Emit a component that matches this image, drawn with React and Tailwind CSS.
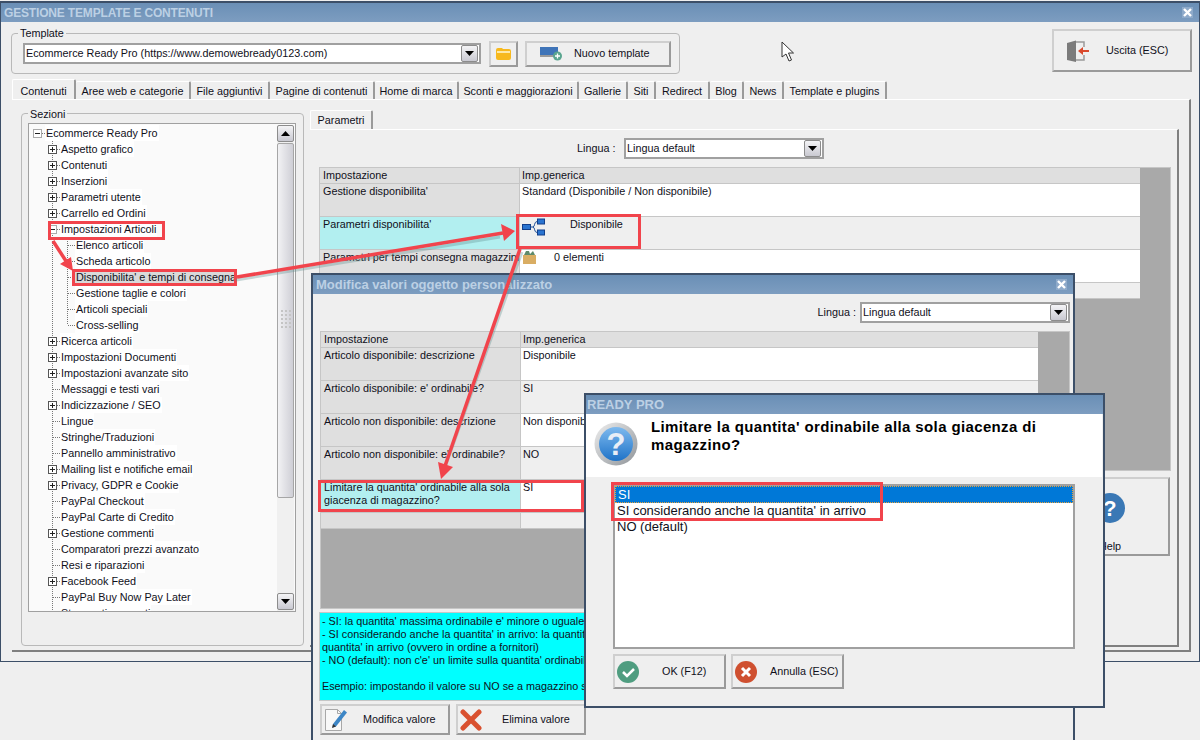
const tree = [
  { t: "Ecommerce Ready Pro", l: 0, box: "minus" },
  { t: "Aspetto grafico", l: 1, box: "plus" },
  { t: "Contenuti", l: 1, box: "plus" },
  { t: "Inserzioni", l: 1, box: "plus" },
  { t: "Parametri utente", l: 1, box: "plus" },
  { t: "Carrello ed Ordini", l: 1, box: "plus" },
  { t: "Impostazioni Articoli", l: 1, box: "minus" },
  { t: "Elenco articoli", l: 2 },
  { t: "Scheda articolo", l: 2 },
  { t: "Disponibilita' e tempi di consegna", l: 2, sel: true },
  { t: "Gestione taglie e colori", l: 2 },
  { t: "Articoli speciali", l: 2 },
  { t: "Cross-selling", l: 2 },
  { t: "Ricerca articoli", l: 1, box: "plus" },
  { t: "Impostazioni Documenti", l: 1, box: "plus" },
  { t: "Impostazioni avanzate sito", l: 1, box: "plus" },
  { t: "Messaggi e testi vari", l: 1 },
  { t: "Indicizzazione / SEO", l: 1, box: "plus" },
  { t: "Lingue", l: 1 },
  { t: "Stringhe/Traduzioni", l: 1 },
  { t: "Pannello amministrativo", l: 1 },
  { t: "Mailing list e notifiche email", l: 1, box: "plus" },
  { t: "Privacy, GDPR e Cookie", l: 1, box: "plus" },
  { t: "PayPal Checkout", l: 1 },
  { t: "PayPal Carte di Credito", l: 1 },
  { t: "Gestione commenti", l: 1, box: "plus" },
  { t: "Comparatori prezzi avanzato", l: 1 },
  { t: "Resi e riparazioni", l: 1 },
  { t: "Facebook Feed", l: 1, box: "plus" },
  { t: "PayPal Buy Now Pay Later", l: 1 },
  { t: "Strumenti avanzati", l: 1 },
];

const tabs = [
  ["Contenuti", "w-[64px]"],
  ["Aree web e categorie", "w-[115px]"],
  ["File aggiuntivi", "w-[79px]"],
  ["Pagine di contenuti", "w-[105px]"],
  ["Home di marca", "w-[84px]"],
  ["Sconti e maggiorazioni", "w-[120px]"],
  ["Gallerie", "w-[49px]"],
  ["Siti", "w-[28px]"],
  ["Redirect", "w-[54px]"],
  ["Blog", "w-[34px]"],
  ["News", "w-[40px]"],
  ["Template e plugins", "w-[103px]"],
];

const bevel = "border-2 border-t-[#cfcfcf] border-l-[#cfcfcf] border-r-[#9a9a9a] border-b-[#9a9a9a]";
const titleBar = "bg-gradient-to-b from-[#6a8fb6] to-[#7d9dc0] text-[#bcd0e4] font-bold";

const Triangle = () => (
  <svg width="9" height="5" viewBox="0 0 9 5"><path d="M0 0h9L4.5 5z" fill="#000" /></svg>
);

const ArrowBox = ({ up, className = "" }) => (
  <div className={`flex h-[17px] w-[17px] shrink-0 items-center justify-center rounded-[2px] border border-[#8c8c8c] bg-gradient-to-b from-[#f4f4f6] to-[#c9c9d1] ${className}`}>
    <div className={up ? "rotate-180" : ""}><Triangle /></div>
  </div>
);

const Select = ({ className, text }) => (
  <div className={`flex h-[21px] items-center justify-between border-2 border-[#a0a0a0] bg-white pl-[1px] pr-[1px] ${className}`}>
    <span className="whitespace-nowrap">{text}</span>
    <ArrowBox />
  </div>
);

const CloseX = () => (
  <div className="flex h-[11px] w-[11px] items-center justify-center bg-[#8eaaca]">
    <svg width="9" height="9" viewBox="0 0 9 9"><path d="M1 1l7 7M8 1L1 8" stroke="#fff" strokeWidth="2.4" /></svg>
  </div>
);

const Expander = ({ kind }) => (
  <svg width="9" height="9" viewBox="0 0 9 9" className="shrink-0">
    <rect x=".5" y=".5" width="8" height="8" fill="#fff" stroke={kind === "minus" ? "#aaa" : "#555"} />
    <path d={kind === "plus" ? "M2 4.5h5M4.5 2v5" : "M2 4.5h5"} stroke="#222" />
  </svg>
);

const TreeRow = ({ item }) => {
  const indent = item.l === 0 ? "ml-[4px]" : item.l === 1 ? "ml-[19px]" : "ml-[39px]";
  return (
    <div className="flex h-4 items-center whitespace-nowrap">
      {item.box ? (
        <div className={`flex items-center ${indent}`}>
          <Expander kind={item.box} />
          <div className="w-[3px] border-t border-dotted border-[#777]" />
        </div>
      ) : (
        <div className={`${item.l === 1 ? "ml-[24px] w-[7px]" : "ml-[39px] w-[7px]"} border-t border-dotted border-[#777]`} />
      )}
      <span className={`px-px leading-4 ${item.sel ? "bg-[#d9d9d9]" : "bg-white"}`}>{item.t}</span>
    </div>
  );
};

const Row = ({ label, value, alt, hi, h = "h-[33px]", children }) => (
  <div className={`flex ${h} border-b border-[#c6c6c6]`}>
    <div className={`w-[200px] shrink-0 overflow-hidden whitespace-pre border-r border-[#c6c6c6] pl-[3px] pt-[1px] leading-[13px] ${hi ? "bg-[#b2eff0]" : "bg-[#dfdfdf]"}`}>{label}</div>
    <div className={`flex-1 whitespace-nowrap pl-[2px] pt-[1px] leading-[13px] ${alt ? "bg-[#efefef]" : "bg-white"}`}>{value}{children}</div>
  </div>
);

const HeaderRow = () => (
  <div className="flex h-4 border-b border-[#c6c6c6] bg-[#dfdfdf] leading-[15px]">
    <div className="w-[200px] shrink-0 border-r border-[#c6c6c6] pl-[3px]">Impostazione</div>
    <div className="flex-1 pl-[2px]">Imp.generica</div>
  </div>
);

const TreeIcon = () => (
  <svg width="24" height="18" viewBox="0 0 24 18" className="shrink-0">
    <path d="M8 9h3M11 9C13 9 12 3.500 15 3.500M11 9C13 9 12 14.500 15 14.500" fill="none" stroke="#1e4f99" />
    <rect x=".5" y="6.500" width="8" height="5" fill="#2a74d0" stroke="#123f8a" />
    <rect x="15.500" y="1" width="7" height="5" fill="#2a74d0" stroke="#123f8a" />
    <rect x="15.500" y="12" width="7" height="5" fill="#2a74d0" stroke="#123f8a" />
  </svg>
);

const BoxIcon = () => (
  <svg width="15" height="14" viewBox="0 0 15 14" className="-mt-px shrink-0">
    <rect x="1" y="5" width="13" height="9" fill="#d9ad63" />
    <path d="M2 5l2-4h3l1 3 3-3 2 4z" fill="#5e8a6a" />
  </svg>
);

const FolderIcon = () => (
  <svg width="15" height="12" viewBox="0 0 15 12">
    <path d="M0 2q0-2 2-2h4l1 1h6q2 0 2 2v7q0 2-2 2H2q-2 0-2-2z" fill="#f7b91e" />
    <path d="M1 3h13v2H1z" fill="#fde9a8" />
  </svg>
);

const NewTemplateIcon = () => (
  <svg width="23" height="14" viewBox="0 0 23 14">
    <rect width="18" height="9" fill="#3f74b8" />
    <rect y="8" width="18" height="2" fill="#9a9a9a" />
    <circle cx="17.500" cy="9" r="4.500" fill="#5aa58f" />
    <path d="M15 9h5M17.500 6.500v5" stroke="#fff" strokeWidth="1.300" />
  </svg>
);

const DoorIcon = () => (
  <svg width="22" height="22" viewBox="0 0 22 22">
    <path d="M9 2h8v5M17 15v5H9" fill="none" stroke="#9a9a9a" strokeWidth="1.500" />
    <path d="M0 3l9-2.500v21.500l-9-2z" fill="#7b7b7b" />
    <path d="M22 11h-9" stroke="#d9492c" strokeWidth="2" />
    <path d="M11 11l5-4v8z" fill="#d9492c" />
  </svg>
);

const EditIcon = () => (
  <svg width="24" height="24" viewBox="0 0 24 24">
    <path d="M1.500 1.500h12l4 4v17h-16z" fill="#f8f8f8" stroke="#a8a8a8" />
    <path d="M13.500 1.500v4h4" fill="none" stroke="#a8a8a8" />
    <path d="M9 16L20 2l3 2.500-11 14-3.500 1z" fill="#3d86c6" />
    <path d="M8 20l1-4 3 2.500z" fill="#333" />
  </svg>
);

const RedX = () => (
  <svg width="22" height="22" viewBox="0 0 22 22">
    <path d="M3 3l16 16M19 3L3 19" stroke="#d9502f" strokeWidth="5" strokeLinecap="round" />
  </svg>
);

const RoundIcon = ({ color, size = 22, children }) => (
  <svg width={size} height={size} viewBox="0 0 22 22" className="shrink-0">
    <circle cx="11" cy="11" r="11" fill={color} />
    {children}
  </svg>
);

const QuestionIcon = () => (
  <svg width="44" height="44" viewBox="0 0 44 44">
    <defs>
      <linearGradient id="q-ring" x1="0" y1="0" x2="1" y2="1">
        <stop offset="0" stopColor="#eeeeee" />
        <stop offset="1" stopColor="#8f9499" />
      </linearGradient>
      <linearGradient id="q-fill" x1="0" y1="0" x2="0" y2="1">
        <stop offset="0" stopColor="#7db9ee" />
        <stop offset="1" stopColor="#1f73c8" />
      </linearGradient>
    </defs>
    <circle cx="22" cy="22" r="21.500" fill="url(#q-ring)" />
    <circle cx="22" cy="22" r="17" fill="url(#q-fill)" />
    <text x="22" y="33" textAnchor="middle" fontSize="31" fontWeight="700" fill="#e8eef6" fontFamily="Liberation Sans, sans-serif">?</text>
  </svg>
);

const Cursor = () => (
  <svg width="14" height="21" viewBox="0 0 14 21" className="absolute left-[781px] top-[41px]">
    <path d="M1 1v15l4-3 3 7 2.500-1-3-7h5z" fill="#fff" stroke="#333" />
  </svg>
);

const Annotations = () => {
  const red = "#f1444c";
  return (
    <svg width="1200" height="740" className="pointer-events-none absolute left-0 top-0">
      <g fill="none" stroke={red} strokeWidth="3">
        <rect x="49.500" y="222.500" width="114" height="16" />
        <rect x="73.500" y="270.500" width="162" height="14" />
        <rect x="517.500" y="215.500" width="122" height="32" />
        <rect x="319.500" y="481.500" width="263" height="29" />
        <rect x="612.500" y="483.500" width="269" height="36" />
      </g>
      <g stroke="#5f8f8f" strokeOpacity=".35" strokeWidth="3" fill="none">
        <path d="M236 280L500 237" />
        <path d="M522 252L444 470" />
      </g>
      <g stroke={red} strokeWidth="3.500" fill={red}>
        <path d="M53 241L66 261" />
        <path d="M237 277L503 233" />
        <path d="M520 249L445 466" />
      </g>
      <g fill={red}>
        <path d="M73 271L60 264L71 257z" />
        <path d="M515 231L501 224L504 241z" />
        <path d="M441 479L438 462L453 467z" />
      </g>
    </svg>
  );
};

const Dialog = () => (
  <div className="absolute left-[311px] top-[273px] h-[490px] w-[764px] border-2 border-[#3c4f68] bg-[#efefef]">
    <div className={`flex h-[19px] items-center justify-between pl-[3px] pr-[6px] text-[13px] ${titleBar}`}>
      <span>Modifica valori oggetto personalizzato</span>
      <CloseX />
    </div>
    <div className="flex h-[37px] items-center justify-end gap-[4px] pr-[3px]">
      <span>Lingua :</span>
      <Select className="w-[210px]" text="Lingua default" />
    </div>
    <div className="ml-[7px] flex h-[278px] w-[750px] flex-col border border-[#c6c6c6] bg-[#a9a9a9]">
      <div className="w-[717px]">
        <HeaderRow />
        <Row label="Articolo disponibile: descrizione" value="Disponibile" />
        <Row label="Articolo disponibile: e' ordinabile?" value="SI" alt />
        <Row label="Articolo non disponibile: descrizione" value="Non disponibile" />
        <Row label="Articolo non disponibile: e' ordinabile?" value="NO" alt />
        <Row label={"Limitare la quantita' ordinabile alla sola\ngiacenza di magazzino?"} value="SI" hi />
        <Row h="h-4" alt />
      </div>
    </div>
    <div className="ml-[6px] mt-[3px] h-[89px] w-[751px] overflow-hidden whitespace-nowrap border border-[#c6c6c6] bg-[#00ffff] pl-[2px] pt-[2px] leading-[13px]">
      <div>- SI: la quantita' massima ordinabile e' minore o uguale alla giacenza di magazzino</div>
      <div>- SI considerando anche la quantita' in arrivo: la quantita' massima ordinabile e' minore o uguale alla giacenza piu' la</div>
      <div>quantita' in arrivo (ovvero in ordine a fornitori)</div>
      <div>- NO (default): non c'e' un limite sulla quantita' ordinabile</div>
      <div className="h-[13px]" />
      <div>Esempio: impostando il valore su NO se a magazzino sono presenti 5 pezzi</div>
    </div>
    <div className="ml-[7px] mt-[3px] flex gap-[6px]">
      <button className={`flex h-[31px] w-[130px] items-center whitespace-nowrap pl-[2px] ${bevel}`}>
        <EditIcon />
        <span className="ml-[15px]">Modifica valore</span>
      </button>
      <button className={`flex h-[31px] w-[130px] items-center whitespace-nowrap pl-[2px] ${bevel}`}>
        <RedX />
        <span className="ml-[8px] pl-[12px]">Elimina valore</span>
      </button>
    </div>
  </div>
);

const Prompt = () => (
  <div className="absolute left-[584px] top-[393px] h-[315px] w-[521px] border-2 border-[#3c4f68] bg-[#efefef]">
    <div className={`flex h-[19px] items-center pl-[1px] text-[13px] ${titleBar}`}>READY PRO</div>
    <div className="mr-[1px] flex h-[63px] bg-white">
      <div className="ml-[8px] mt-[8px]"><QuestionIcon /></div>
      <div className="ml-[13px] mt-[4px] text-[15px] font-bold leading-[18px] tracking-[0.37px] text-black">
        Limitare la quantita' ordinabile alla sola giacenza di<br />magazzino?
      </div>
    </div>
    <div className="ml-[27px] mt-[7px] h-[165px] w-[462px] border-2 border-[#a0a0a0] bg-white text-[13px] leading-4">
      <div className="h-[17px] border border-dotted border-[#e8a33d] bg-[#0078d7] pl-[2px] text-white">SI</div>
      <div className="pl-[2px]">SI considerando anche la quantita' in arrivo</div>
      <div className="pl-[2px]">NO (default)</div>
    </div>
    <div className="ml-[27px] mt-[5px] flex gap-[5px]">
      <button className={`flex h-[35px] w-[113px] items-center whitespace-nowrap pl-[2px] ${bevel}`}>
        <RoundIcon color="#4f9d80"><path d="M6 11l4 4 7-7" fill="none" stroke="#fff" strokeWidth="2.500" /></RoundIcon>
        <span className="ml-[23px]">OK (F12)</span>
      </button>
      <button className={`flex h-[35px] w-[113px] items-center whitespace-nowrap pl-[2px] ${bevel}`}>
        <RoundIcon color="#cf5030"><path d="M7 7l8 8M15 7l-8 8" fill="none" stroke="#fff" strokeWidth="3" /></RoundIcon>
        <span className="ml-[13px]">Annulla (ESC)</span>
      </button>
    </div>
  </div>
);

export default function App() {
  return (
    <div className="relative h-[740px] w-[1200px] overflow-hidden bg-[#efefef] text-[10.8px] text-[#10101a] [font-family:'Liberation_Sans',sans-serif]">
      {/* main window */}
      <div className="mt-px h-[661px] border-x border-b border-t-2 border-[#3c4f68] bg-[#efefef]">
        <div className={`flex h-[19px] items-center justify-between pl-[3px] pr-[6px] text-[12px] tracking-[-0.17px] ${titleBar}`}>
          <span>GESTIONE TEMPLATE E CONTENUTI</span>
          <CloseX />
        </div>

        <div className="flex h-[58px] items-start justify-between pr-[7px]">
          <div className="relative ml-[10px] mt-[11px] flex h-[41px] w-[669px] items-center rounded-[4px] border border-[#b9b9b9] pl-[11px]">
            <span className="absolute -top-[8px] left-[6px] bg-[#efefef] px-[2px] leading-[14px]">Template</span>
            <Select className="w-[458px]" text="Ecommerce Ready Pro (https://www.demowebready0123.com)" />
            <button className={`ml-[8px] flex h-[26px] w-[29px] items-center justify-center ${bevel}`}><FolderIcon /></button>
            <button className={`ml-[7px] flex h-[26px] w-[146px] items-center whitespace-nowrap pl-[13px] ${bevel}`}>
              <NewTemplateIcon />
              <span className="ml-[11px]">Nuovo template</span>
            </button>
          </div>
          <button className={`mt-[7px] flex h-[43px] w-[140px] items-center whitespace-nowrap pl-[13px] ${bevel}`}>
            <DoorIcon />
            <span className="ml-[17px]">Uscita (ESC)</span>
          </button>
        </div>

        {/* tabs */}
        <div className="ml-[11px] flex h-[19px] items-end">
          {tabs.map(([t, w], i) => (
            <div
              key={t}
              className={`flex ${w} items-center justify-center whitespace-nowrap rounded-t-[2px] border-r-2 border-r-[#9a9a9a] border-t border-t-white ${i === 0 ? "h-[20px] border-l border-l-white pt-[4px]" : "h-[18px] pt-[2px]"}`}
            >
              {t}
            </div>
          ))}
        </div>

        <div className="ml-[11px] flex h-[553px] w-[1179px] border-r-2 border-b-2 border-t border-[#7f7f7f] border-t-white pl-[9px] pt-[13px]">
          {/* sezioni */}
          <div className="relative h-[533px] w-[283px] rounded-[4px] border border-[#b9b9b9] pl-[6px] pt-[9px]">
            <span className="absolute -top-[7px] left-[6px] bg-[#efefef] px-[2px] leading-[14px]">Sezioni</span>
            <div className="relative flex h-[489px] w-[268px] overflow-hidden border border-[#a0a0a0] bg-[#fafafa]">
              <div className="relative flex-1 overflow-hidden pt-[1px]">
                <div className="absolute left-[23px] top-[12px] h-[480px] border-l border-dotted border-[#777]" />
                <div className="absolute left-[38px] top-[108px] h-[92px] border-l border-dotted border-[#777]" />
                {tree.map((item) => (
                  <div key={item.t} className="relative"><TreeRow item={item} /></div>
                ))}
              </div>
              <div className="mr-px mt-px flex w-[17px] flex-col bg-[#f0f0f0]">
                <ArrowBox up />
                <div className="relative mt-px flex h-[355px] w-[17px] items-center justify-center rounded-[2px] border border-[#a6a6a6] bg-gradient-to-r from-[#f2f2f4] to-[#cfcfd6]">
                  <div className="absolute top-[166px] grid grid-cols-3 gap-[2px]">
                    {Array.from({ length: 15 }).map((_, i) => <div key={i} className="h-[2px] w-[2px] bg-[#c4c4c4]" />)}
                  </div>
                </div>
                <ArrowBox className="mt-[95px]" />
              </div>
            </div>
          </div>

          {/* parametri */}
          <div className="ml-[6px] -mt-[3px] w-[869px]">
            <div className="flex h-[19px] w-[63px] items-center justify-center rounded-t-[2px] border-l border-t border-r-2 border-white border-r-[#9a9a9a]">Parametri</div>
            <div className="h-[518px] border-t border-r-2 border-b-2 border-[#7f7f7f] border-t-white pl-[9px]">
              <div className="flex h-[37px] items-center pb-[1px] pl-[258px]">
                <span className="w-[47px] whitespace-nowrap">Lingua :</span>
                <Select className="w-[200px]" text="Lingua default" />
              </div>
              <div className="h-[304px] w-[852px] border border-[#c6c6c6] bg-[#a9a9a9]">
                <div className="w-[820px]">
                  <HeaderRow />
                  <Row label="Gestione disponibilita'" value="Standard (Disponibile / Non disponibile)" />
                  <Row label="Parametri disponibilita'" hi alt>
                    <div className="flex">
                      <TreeIcon />
                      <span className="ml-[24px]">Disponibile</span>
                    </div>
                  </Row>
                  <Row label="Parametri per tempi consegna magazzini">
                    <div className="flex">
                      <BoxIcon />
                      <span className="ml-[17px]">0 elementi</span>
                    </div>
                  </Row>
                  <Row h="h-4" alt />
                </div>
              </div>
              <div className="flex justify-end pr-[7px] pt-[6px]">
                <button className={`flex h-[79px] w-[120px] flex-col items-center pt-[14px] ${bevel}`}>
                  <RoundIcon color="#3a78b5" size={30}>
                    <text x="11" y="17" textAnchor="middle" fontSize="16" fontWeight="700" fill="#fff">?</text>
                  </RoundIcon>
                  <span className="mt-[15px]">Help</span>
                </button>
              </div>
            </div>
          </div>
        </div>
      </div>

      <Cursor />
      <Dialog />
      <Prompt />
      <Annotations />
    </div>
  );
}
